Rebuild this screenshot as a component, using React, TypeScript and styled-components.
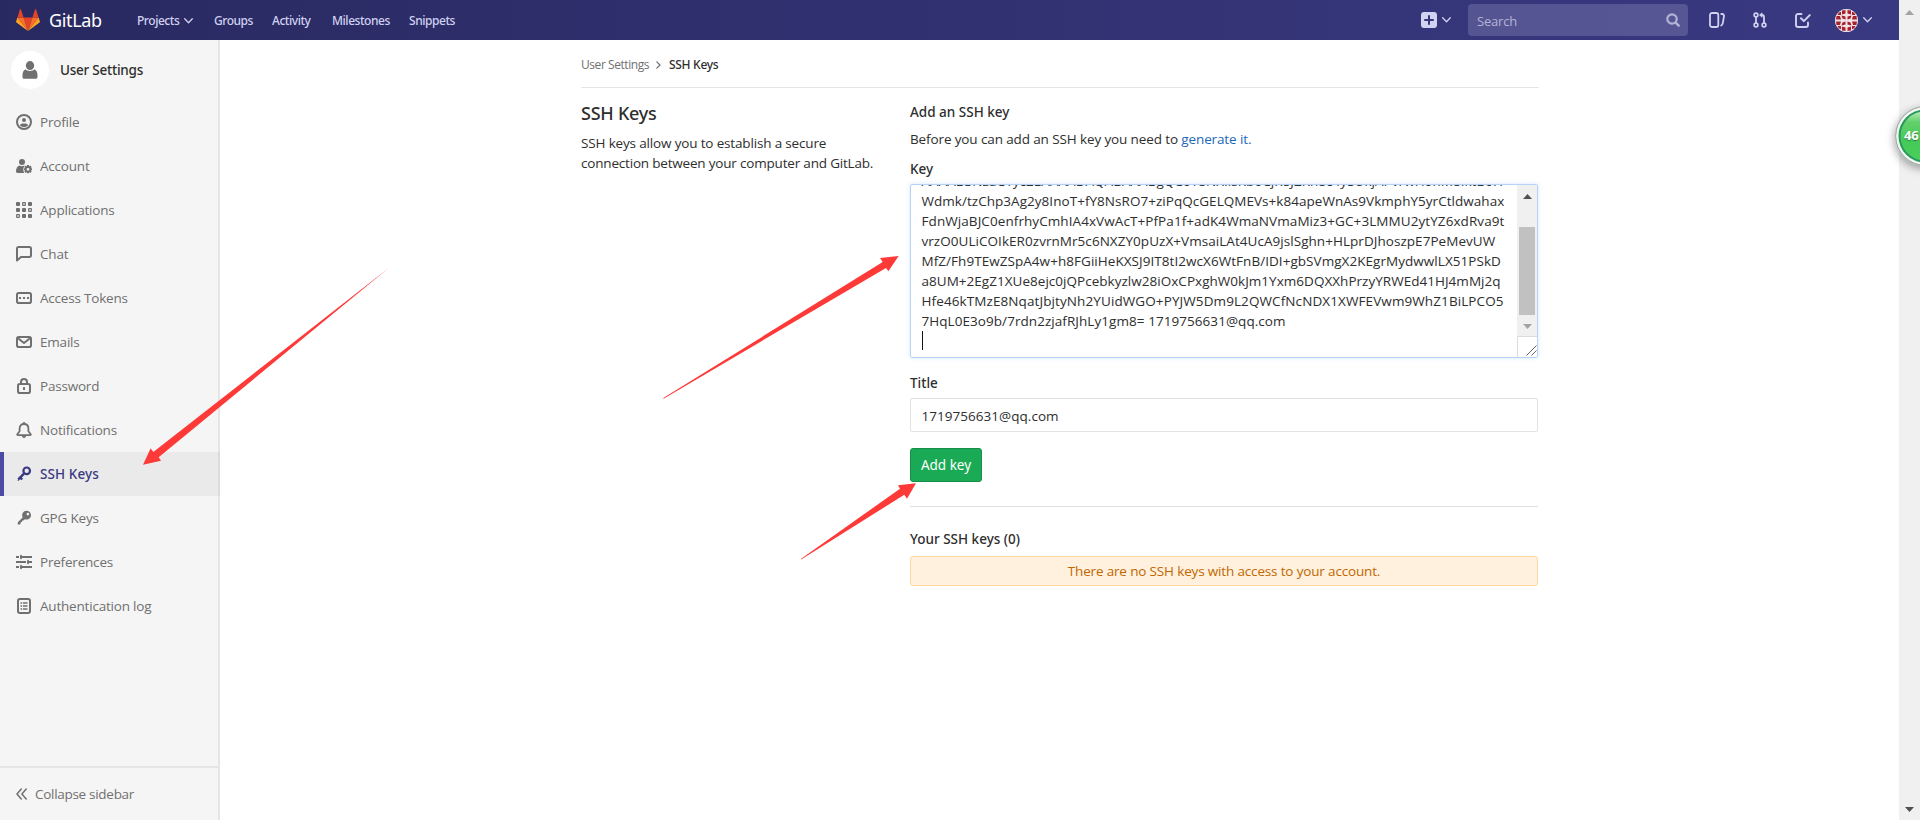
import React from "react";
import styled, { createGlobalStyle } from "styled-components";

const mediumFont = `"Noto Sans", "Open Sans", sans-serif`;

const Global = createGlobalStyle`
  * { box-sizing: border-box; }
  html, body { margin: 0; padding: 0; }
  body {
    background: #fff;
    color: #2e2e2e;
    font-family: "Open Sans", "Noto Sans", sans-serif;
    font-size: 13.5px;
    line-height: 20px;
    overflow: hidden;
  }
`;

const Viewport = styled.div`
  position: relative;
  display: flex;
  width: 1920px;
  height: 820px;
  overflow: hidden;
`;

const Page = styled.div`
  display: flex;
  flex-direction: column;
  width: 1899px;
`;

/* ---------- top bar ---------- */

const Navbar = styled.header`
  display: flex;
  align-items: center;
  flex: none;
  height: 40px;
  padding: 0 27px 0 16px;
  color: #d1d1f0;
  background: linear-gradient(to right, #292961, #393982);
`;

const Brand = styled.div`
  display: flex;
  align-items: center;
  width: 121px;
  gap: 9px;
  color: #fff;
  font-family: ${mediumFont};
  font-size: 18px;
  letter-spacing: -0.35px;
`;

const NavLink = styled.a<{ $w: number }>`
  display: flex;
  align-items: center;
  gap: 5px;
  flex: none;
  width: ${(p) => p.$w}px;
  padding-top: 1px;
  font-family: ${mediumFont};
  font-size: 12px;
  font-weight: 500;
  letter-spacing: -0.45px;
`;

const Spacer = styled.div`
  flex: 1;
`;

const NavTool = styled.div<{ $gap: number }>`
  display: flex;
  align-items: center;
  gap: 5px;
  margin-left: ${(p) => p.$gap}px;
`;

const SearchBox = styled.div`
  display: flex;
  align-items: center;
  justify-content: space-between;
  width: 220px;
  height: 32px;
  margin-left: 17px;
  padding: 1px 8px 0 9px;
  border-radius: 4px;
  background: rgba(209, 209, 240, 0.2);
  color: #b4b3d6;
  font-size: 13px;
  letter-spacing: -0.2px;
  svg { margin-top: -2px; }
`;

/* ---------- sidebar ---------- */

const Body = styled.div`
  display: flex;
  flex: 1;
`;

const Sidebar = styled.nav`
  display: flex;
  flex-direction: column;
  width: 220px;
  background: #f5f5f5;
  box-shadow: inset -2px 0 0 #e5e5e5;
`;

const Context = styled.div`
  display: flex;
  align-items: center;
  gap: 11px;
  height: 60px;
  padding-left: 11px;
  font-family: ${mediumFont};
  font-weight: 500;
  letter-spacing: -0.23px;
`;

const ContextAvatar = styled.div`
  display: flex;
  align-items: center;
  justify-content: center;
  width: 38px;
  height: 38px;
  border-radius: 50%;
  background: #fff;
`;

const SideItem = styled.a<{ $active?: boolean }>`
  display: flex;
  align-items: center;
  gap: 8px;
  height: 44px;
  padding-left: ${(p) => (p.$active ? 12 : 16)}px;
  border-left: ${(p) => (p.$active ? "4px solid #4b4ba3" : "0")};
  background: ${(p) => (p.$active ? "rgba(0, 0, 0, 0.043)" : "transparent")};
  color: ${(p) => (p.$active ? "#393982" : "#707070")};
  font-family: ${(p) => (p.$active ? mediumFont : "inherit")};
  font-weight: ${(p) => (p.$active ? 500 : 400)};
  letter-spacing: ${(p) => (p.$active ? 0.1 : -0.2)}px;
`;

const Collapse = styled.div`
  display: flex;
  align-items: center;
  gap: 8px;
  height: 54px;
  margin-top: auto;
  padding-left: 16px;
  border-top: 2px solid #e5e5e5;
  color: #707070;
  letter-spacing: -0.29px;
`;

/* ---------- content ---------- */

const Main = styled.main`
  width: 958px;
  margin-left: 361px;
`;

const Breadcrumbs = styled.div`
  display: flex;
  align-items: center;
  height: 48px;
  padding-top: 2px;
  border-bottom: 1px solid #e5e5e5;
  font-size: 12px;
  color: #707070;
`;

const Crumb = styled.span<{ $current?: boolean }>`
  font-family: ${(p) => (p.$current ? mediumFont : "inherit")};
  font-weight: ${(p) => (p.$current ? 500 : 400)};
  color: ${(p) => (p.$current ? "#2e2e2e" : "#707070")};
  letter-spacing: ${(p) => (p.$current ? -0.3 : -0.44)}px;
`;

const CrumbArrow = styled.svg`
  margin: 0 8px 0 7px;
`;

const Columns = styled.div`
  display: flex;
`;

const Intro = styled.section`
  width: 329px;
`;

const PageTitle = styled.h4`
  margin: 13px 0 8px;
  height: 24px;
  font-family: ${mediumFont};
  font-size: 18px;
  line-height: 24px;
  font-weight: 500;
  letter-spacing: -0.25px;
`;

const Text = styled.p<{ $ls: number }>`
  margin: 0;
  white-space: nowrap;
  letter-spacing: ${(p) => p.$ls}px;
  a { color: #1b69b6; }
`;

const Form = styled.section`
  width: 628px;
  padding-top: 14px;
`;

const Heading = styled.h5`
  margin: 0 0 7px;
  font-family: ${mediumFont};
  font-size: 13.5px;
  line-height: 20px;
  font-weight: 500;
`;

const Label = styled.label<{ $top: number }>`
  display: block;
  margin: ${(p) => p.$top}px 0 5px;
  font-family: ${mediumFont};
  font-weight: 500;
`;

const KeyBox = styled.div`
  display: flex;
  height: 174px;
  border: 1px solid #b3d4f5;
  border-radius: 2px;
  box-shadow: 0 0 4px rgba(115, 175, 234, 0.3);
  overflow: hidden;
`;

const KeyText = styled.div`
  display: flex;
  flex-direction: column;
  justify-content: flex-end;
  flex: 1;
  padding: 0 0 6px 10.5px;
`;

const KeyLine = styled.div<{ $ls: number }>`
  flex: none;
  height: 20px;
  white-space: pre;
  letter-spacing: ${(p) => p.$ls}px;
`;

const Caret = styled.div`
  width: 1px;
  height: 19px;
  background: #111;
`;

const KeyScroll = styled.div`
  display: flex;
  flex-direction: column;
  width: 20px;
  background: #f0f0f0;
`;

const ScrollThumb = styled.div`
  height: 88px;
  margin: 21px 2px 0;
  background: #c1c1c1;
`;

const ScrollEnd = styled.div<{ $h: number }>`
  display: flex;
  align-items: center;
  justify-content: center;
  height: ${(p) => p.$h}px;
  padding-top: 1px;
`;

const Resizer = styled.div`
  height: 21px;
  margin-top: auto;
  border-top: 1px solid #dcdcdc;
  border-left: 1px solid #dcdcdc;
  background: #fff;
  svg { display: block; }
`;

const Input = styled.div`
  display: flex;
  align-items: center;
  height: 34px;
  padding: 1px 0 0 10.5px;
  border: 1px solid #e3e3e3;
  border-radius: 2px;
  letter-spacing: 0.04px;
`;

const Button = styled.button`
  display: block;
  width: 72px;
  height: 34px;
  margin-top: 16px;
  padding: 0;
  border: 1px solid #168f48;
  border-radius: 3px;
  background: #1aaa55;
  color: #fff;
  font: inherit;
  font-family: ${mediumFont};
`;

const Rule = styled.hr`
  height: 1px;
  margin: 24px 0 22px;
  border: 0;
  background: #dfdfdf;
`;

const Alert = styled.div`
  height: 30px;
  padding-top: 4px;
  border: 1px solid #fdd9a0;
  border-radius: 3px;
  background: #fff1de;
  color: #c26700;
  text-align: center;
  letter-spacing: -0.16px;
`;

/* ---------- window chrome and overlays ---------- */

const WindowScroll = styled.div`
  display: flex;
  flex-direction: column;
  justify-content: space-between;
  width: 21px;
  background: #f0f0f0;
`;

const Badge = styled.div`
  position: absolute;
  left: 1895px;
  top: 106px;
  width: 60px;
  height: 60px;
  padding: 18px 0 0 8px;
  border: 1px solid #a9a9a9;
  border-radius: 50%;
  box-shadow: inset 0 0 0 2.5px #f4f4f4, inset 0 0 0 4.5px #259a5c, -1px 3px 8px rgba(0, 0, 0, 0.35);
  background: linear-gradient(#b5ebb5 8%, #62cf6c 26%, #45c957 60%, #4bd160);
  color: #fff;
  font-size: 13px;
  font-weight: 700;
  letter-spacing: -0.2px;
  text-shadow: 0 1px 1px #2d7c3c;
`;

const Marks = styled.svg`
  position: absolute;
  left: 0;
  top: 0;
  pointer-events: none;
`;

/* ---------- icons ---------- */

const Svg = ({ size = 16, children }: { size?: number; children: React.ReactNode }) => (
  <svg width={size} height={size} viewBox="0 0 16 16" fill="currentColor">
    {children}
  </svg>
);

const line = { fill: "none", stroke: "currentColor", strokeWidth: 2, strokeLinecap: "round", strokeLinejoin: "round" } as const;

const Chevron = () => (
  <svg width="9" height="6" viewBox="0 0 9 6">
    <path d="M.7.8 4.5 4.7 8.3.8" {...line} strokeWidth={1.3} />
  </svg>
);

const Triangle = ({ down, color }: { down?: boolean; color: string }) => (
  <svg width="9" height="5" viewBox="0 0 9 5">
    <path d={down ? "M0 0h9L4.5 5z" : "M0 5h9L4.5 0z"} fill={color} />
  </svg>
);

const Tanuki = () => (
  <svg width="24" height="22" viewBox="0 0 24 22">
    <path d="M12 22 7.6 8.4h8.8z" fill="#e24329" />
    <path d="M12 22 7.6 8.4H1.4z" fill="#fc6d26" />
    <path d="M1.4 8.4.1 12.5c-.1.4 0 .8.3 1L12 22z" fill="#fca326" />
    <path d="M1.4 8.4h6.2L4.9.3c-.1-.4-.7-.4-.9 0z" fill="#e24329" />
    <path d="m12 22 4.4-13.6h6.2z" fill="#fc6d26" />
    <path d="m22.6 8.4 1.3 4.1c.1.4 0 .8-.3 1L12 22z" fill="#fca326" />
    <path d="M22.6 8.4h-6.2L19.1.3c.1-.4.7-.4.9 0z" fill="#e24329" />
  </svg>
);

const UserIcon = () => (
  <svg width="16" height="18" viewBox="0 0 16 18" fill="#707070">
    <ellipse cx="8" cy="4.6" rx="4.2" ry="4.5" />
    <path d="M3.6 8.3C5 10.6 11 10.6 12.4 8.3 14.6 9.3 15.5 11.5 15.5 14.5V16c0 1.2-.7 1.8-1.8 1.8H2.3C1.2 17.8.5 17.2.5 16v-1.500c0-3 .9-5.200 3.100-6.200z" />
  </svg>
);

const icons: Record<string, React.ReactNode> = {
  profile: (
    <>
      <circle cx="8" cy="8" r="7" {...line} />
      <circle cx="8" cy="6" r="2" />
      <path d="M3.9 11.2C4.5 9.6 6.2 9.5 8 9.5s3.500.1 4.100 1.700C11.200 12.400 9.700 13 8 13s-3.200-.6-4.100-1.800z" />
    </>
  ),
  account: (
    <>
      <circle cx="6" cy="4" r="3" />
      <path d="M3.5 7.5c1.500 1 3.500 1 5 0C8 9 7.300 10 7.300 11.500c0 1 .3 2.500.9 3.500H1.600C.5 15 0 14.400 0 13.300 0 10.400 1.300 8.300 3.500 7.500z" />
      <path d="M11 7h2v1.400l1.300-.8 1.400 1.500-.9 1.200h1.200v2h-1.300l1 1.200-1.500 1.400L13 14v1.300h-2V14l-1.200.9-1.500-1.400 1-1.200H8v-2h1.200l-.9-1.200 1.400-1.500L11 8.400zm1 2.900a1.400 1.400 0 1 0 0 2.800 1.400 1.400 0 0 0 0-2.800z" fillRule="evenodd" />
    </>
  ),
  applications: (
    <>
      {[0, 1, 2].map((r) =>
        [0, 1, 2].map((c) => {
          const hollow = ["01", "12", "20"].includes(`${r}${c}`);
          return hollow ? (
            <rect key={`${r}${c}`} x={c * 6 + 0.65} y={r * 6 + 0.65} width="2.7" height="2.7" rx=".4" fill="none" stroke="currentColor" strokeWidth="1.2" />
          ) : (
            <rect key={`${r}${c}`} x={c * 6} y={r * 6} width="4" height="4" rx=".9" />
          );
        })
      )}
    </>
  ),
  chat: <path d="M1 14.500V2.700C1 1.700 1.700 1 2.700 1h10.600c1 0 1.700.7 1.700 1.700v6.600c0 1-.7 1.700-1.700 1.700H5z" {...line} />,
  token: (
    <>
      <rect x="1" y="3" width="14" height="10" rx="1.8" {...line} />
      <rect x="3" y="7" width="2" height="2" />
      <rect x="7" y="7" width="2" height="2" />
      <rect x="11" y="7" width="2" height="2" />
    </>
  ),
  email: (
    <>
      <rect x="1" y="3" width="14" height="10" rx="1.8" {...line} />
      <path d="M2 4.2 8 9l6-4.800" {...line} />
    </>
  ),
  lock: (
    <>
      <rect x="2" y="6" width="12" height="9" rx="1.8" {...line} />
      <path d="M5 6V4a3 3 0 0 1 6 0v2" {...line} />
      <rect x="7" y="9" width="2" height="3" rx=".6" />
    </>
  ),
  bell: (
    <>
      <path d="M3.6 9.3V6.6C3.6 3.600 5.500 2 8 2s4.400 1.600 4.400 4.600v2.700l2.300 2.900c.3.500 0 .9-.5.9H1.800c-.5 0-.8-.4-.5-.9z" {...line} strokeWidth={1.8} />
      <rect x="7" y="0" width="2" height="2" rx=".8" />
      <path d="M6 14h4c0 2.600-4 2.600-4 0z" />
    </>
  ),
  key: (
    <>
      <circle cx="10.7" cy="4.8" r="3.3" {...line} strokeWidth={2.2} />
      <path d="M8 7.600 2.300 13.400M4.300 11.600l1.900 1.900M2.300 13.300l.8.800" {...line} strokeWidth={2.4} strokeLinecap="butt" />
    </>
  ),
  gpg: (
    <path
      fillRule="evenodd"
      d="M10.600.8a4.400 4.400 0 0 1 0 8.800c-.7 0-1.200-.1-1.800-.4L7.500 10.500H6.100v1.500H4.700v1.500L3.900 14.600H1.800V12.300L6.600 7.400A4.400 4.400 0 0 1 10.600.8zm1.300 2a1.300 1.300 0 1 0 0 2.600 1.300 1.300 0 0 0 0-2.600z"
    />
  ),
  preferences: (
    <>
      <path d="M0 3h3M4.500 3H16M0 8h10M12 8h4M0 13h3M4.500 13H16" {...line} strokeWidth={1.8} strokeLinecap="butt" />
      <path d="M5 1.700v2.600M12 6.700v2.600M5 11.700v2.600" {...line} strokeWidth={1.8} />
    </>
  ),
  log: (
    <>
      <rect x="2" y="1" width="12" height="14" rx="2" {...line} />
      <path d="M4.500 5h1.700M4.500 8h1.700M4.500 11h1.700M7 5h4.500M7 8h4.500M7 11h4.500" {...line} strokeWidth={1.7} strokeLinecap="butt" />
    </>
  ),
};

const PlusSquare = () => (
  <Svg>
    <path fillRule="evenodd" d="M3 0h10a3 3 0 0 1 3 3v10a3 3 0 0 1-3 3H3a3 3 0 0 1-3-3V3a3 3 0 0 1 3-3zm4 7H4a1 1 0 0 0 0 2h3v3a1 1 0 0 0 2 0V9h3a1 1 0 0 0 0-2H9V4a1 1 0 0 0-2 0z" />
  </Svg>
);

const SearchIcon = () => (
  <svg width="14" height="14" viewBox="0 0 14 14">
    <circle cx="6" cy="6" r="4.7" {...line} strokeWidth={2.2} />
    <path d="m9.700 9.700 3 3" {...line} strokeWidth={2.4} />
  </svg>
);

const IssuesIcon = () => (
  <Svg>
    <rect x="1" y="1" width="8.3" height="14" rx="2" {...line} strokeWidth={1.8} />
    <path d="M11.600 2h1.600c1.300.2 2 1 1.800 2.200l-1.200 7c-.2 1.200-.9 2.200-2.200 2.800" {...line} strokeWidth={1.8} strokeLinecap="butt" />
  </Svg>
);

const MergeIcon = () => (
  <Svg>
    <circle cx="4" cy="3" r="1.9" {...line} strokeWidth={1.6} />
    <circle cx="4" cy="13" r="1.9" {...line} strokeWidth={1.6} />
    <circle cx="12" cy="13" r="1.9" {...line} strokeWidth={1.6} />
    <path d="M4 5v6M12 11V5.500C12 4 11.300 3 10 3H9" {...line} strokeWidth={1.8} strokeLinecap="butt" />
    <path d="M10.300.3v5.400L7 3z" />
  </Svg>
);

const TodoIcon = () => (
  <Svg>
    <path d="M6.500 2H3a2 2 0 0 0-2 2v9a2 2 0 0 0 2 2h8a2 2 0 0 0 2-2v-2.500" {...line} strokeWidth={1.9} />
    <path d="m6 6.300 2.800 2.800 6-6" {...line} />
  </Svg>
);

const Identicon = () => (
  <svg width="23" height="23" viewBox="0 0 23 23">
    <clipPath id="round"><circle cx="11.5" cy="11.5" r="11.5" /></clipPath>
    <g clipPath="url(#round)">
      <rect width="23" height="23" fill="#f1e3e8" />
      <g fill="#a8202c">
        <path d="M7 1h3.500v3.500L7 5.500zM12.500 1H16v4.500l-3.500-1zM7 22h3.500v-3.500l-3.500-1zM12.500 22H16v-4.500l-3.500 1zM1 7h4l1 3.500H1zM22 7h-4l-1 3.500h5zM1 12.500h5l-1 3.500H1zM22 12.500h-5l1 3.500h4z" />
        <path d="m6.500 6.500 4 1v3l-3-1zM16.500 6.500l-4 1v3l3-1zM6.500 16.500l4-1v-3l-3 1zM16.500 16.500l-4-1v-3l3 1z" />
        <path d="M2.500 3H6v3H2.500zM17 3h3.500v3H17zM2.500 17H6v3H2.500zM17 17h3.500v3H17z" />
      </g>
      <circle cx="11.5" cy="11.5" r="11.1" fill="none" stroke="#ded3e3" strokeWidth=".8" />
    </g>
  </svg>
);

/* ---------- data ---------- */

const sideItems: [string, string][] = [
  ["profile", "Profile"],
  ["account", "Account"],
  ["applications", "Applications"],
  ["chat", "Chat"],
  ["token", "Access Tokens"],
  ["email", "Emails"],
  ["lock", "Password"],
  ["bell", "Notifications"],
  ["key", "SSH Keys"],
  ["gpg", "GPG Keys"],
  ["preferences", "Preferences"],
  ["log", "Authentication log"],
];

const keyLines: [string, number][] = [
  ["AAAAB3NzaC1yc2EAAAADAQABAAABgQC0Y8NXIlsKb0CjR8JZKh8c4ySUkjAPvrwH0hM8IktB0H", 0.04],
  ["Wdmk/tzChp3Ag2y8InoT+fY8NsRO7+ziPqQcGELQMEVs+k84apeWnAs9VkmphY5yrCtldwahax", 0.04],
  ["FdnWjaBJC0enfrhyCmhIA4xVwAcT+PfPa1f+adK4WmaNVmaMiz3+GC+3LMMU2ytYZ6xdRva9t", 0.08],
  ["vrzO0ULiCOIkER0zvrnMr5c6NXZY0pUzX+VmsaiLAt4UcA9jslSghn+HLprDJhoszpE7PeMevUW", 0.05],
  ["MfZ/Fh9TEwZSpA4w+h8FGiiHeKXSJ9IT8tI2wcX6WtFnB/IDI+gbSVmgX2KEgrMydwwlLX51PSkD", 0.05],
  ["a8UM+2EgZ1XUe8ejc0jQPcebkyzlw28iOxCPxghW0kJm1Yxm6DQXXhPrzyYRWEd41HJ4mMj2q", 0.03],
  ["Hfe46kTMzE8NqatJbjtyNh2YUidWGO+PYJW5Dm9L2QWCfNcNDX1XWFEVwm9WhZ1BiLPCO5", 0.1],
  ["7HqL0E3o9b/7rdn2zjafRJhLy1gm8= 1719756631@qq.com", 0.06],
];

export default function App() {
  return (
    <>
      <Global />
      <Viewport>
        <Page>
          <Navbar>
            <Brand><Tanuki />GitLab</Brand>
            <NavLink $w={77}>Projects <Chevron /></NavLink>
            <NavLink $w={58}>Groups</NavLink>
            <NavLink $w={60}>Activity</NavLink>
            <NavLink $w={77}>Milestones</NavLink>
            <NavLink $w={60}>Snippets</NavLink>
            <Spacer />
            <NavTool $gap={0}><PlusSquare /><Chevron /></NavTool>
            <SearchBox>Search<SearchIcon /></SearchBox>
            <NavTool $gap={21}><IssuesIcon /></NavTool>
            <NavTool $gap={27}><MergeIcon /></NavTool>
            <NavTool $gap={27}><TodoIcon /></NavTool>
            <NavTool $gap={24}><Identicon /><Chevron /></NavTool>
          </Navbar>
          <Body>
            <Sidebar>
              <Context><ContextAvatar><UserIcon /></ContextAvatar>User Settings</Context>
              {sideItems.map(([icon, label]) => (
                <SideItem key={label} $active={icon === "key"}>
                  <Svg>{icons[icon]}</Svg>
                  {label}
                </SideItem>
              ))}
              <Collapse>
                <svg width="11" height="12" viewBox="0 0 11 12">
                  <path d="M5.300 1 1 6l4.300 5M10.200 1 5.900 6l4.300 5" {...line} strokeWidth={1.5} />
                </svg>
                Collapse sidebar
              </Collapse>
            </Sidebar>
            <Main>
              <Breadcrumbs>
                <Crumb>User Settings</Crumb>
                <CrumbArrow width="5" height="8" viewBox="0 0 5 8">
                  <path d="M.8.8 4 4 .8 7.200" {...line} strokeWidth={1.2} />
                </CrumbArrow>
                <Crumb $current>SSH Keys</Crumb>
              </Breadcrumbs>
              <Columns>
                <Intro>
                  <PageTitle>SSH Keys</PageTitle>
                  <Text $ls={-0.16}>SSH keys allow you to establish a secure</Text>
                  <Text $ls={-0.19}>connection between your computer and GitLab.</Text>
                </Intro>
                <Form>
                  <Heading>Add an SSH key</Heading>
                  <Text $ls={-0.12}>Before you can add an SSH key you need to <a>generate it.</a></Text>
                  <Label $top={10}>Key</Label>
                  <KeyBox>
                    <KeyText>
                      {keyLines.map(([t, ls]) => <KeyLine key={t} $ls={ls}>{t}</KeyLine>)}
                      <KeyLine $ls={0}><Caret /></KeyLine>
                    </KeyText>
                    <KeyScroll>
                      <ScrollEnd $h={21}><Triangle color="#505050" /></ScrollEnd>
                      <ScrollThumb />
                      <ScrollEnd $h={21}><Triangle down color="#a3a3a3" /></ScrollEnd>
                      <Resizer>
                        <svg width="19" height="20" viewBox="0 0 19 20">
                          <path d="m8.500 18.500 10-10M13.500 18.500l5-5" stroke="#666" strokeWidth="1" />
                        </svg>
                      </Resizer>
                    </KeyScroll>
                  </KeyBox>
                  <Label $top={15}>Title</Label>
                  <Input>1719756631@qq.com</Input>
                  <Button>Add key</Button>
                  <Rule />
                  <Heading>Your SSH keys (0)</Heading>
                  <Alert>There are no SSH keys with access to your account.</Alert>
                </Form>
              </Columns>
            </Main>
          </Body>
        </Page>
        <WindowScroll>
          <ScrollEnd $h={23}><Triangle color="#a3a3a3" /></ScrollEnd>
          <ScrollEnd $h={23}><Triangle down color="#505050" /></ScrollEnd>
        </WindowScroll>
        <Badge>46</Badge>
        <Marks width="1920" height="820" viewBox="0 0 1920 820" fill="#fd3a38">
          <path d="M143 464.700 150.700 448.300 153.300 452 389 267.700 158.700 457.300 161 460.700z" />
          <path d="M898.700 256 880 258 882.700 262 663.300 398.100 663.600 398.700 886 268 888.300 271.300z" />
          <path d="M916 483.300 898 485.300 900 488.700 800.800 559 801.200 559.600 904.300 494.700 907 498.700z" />
        </Marks>
      </Viewport>
    </>
  );
}
